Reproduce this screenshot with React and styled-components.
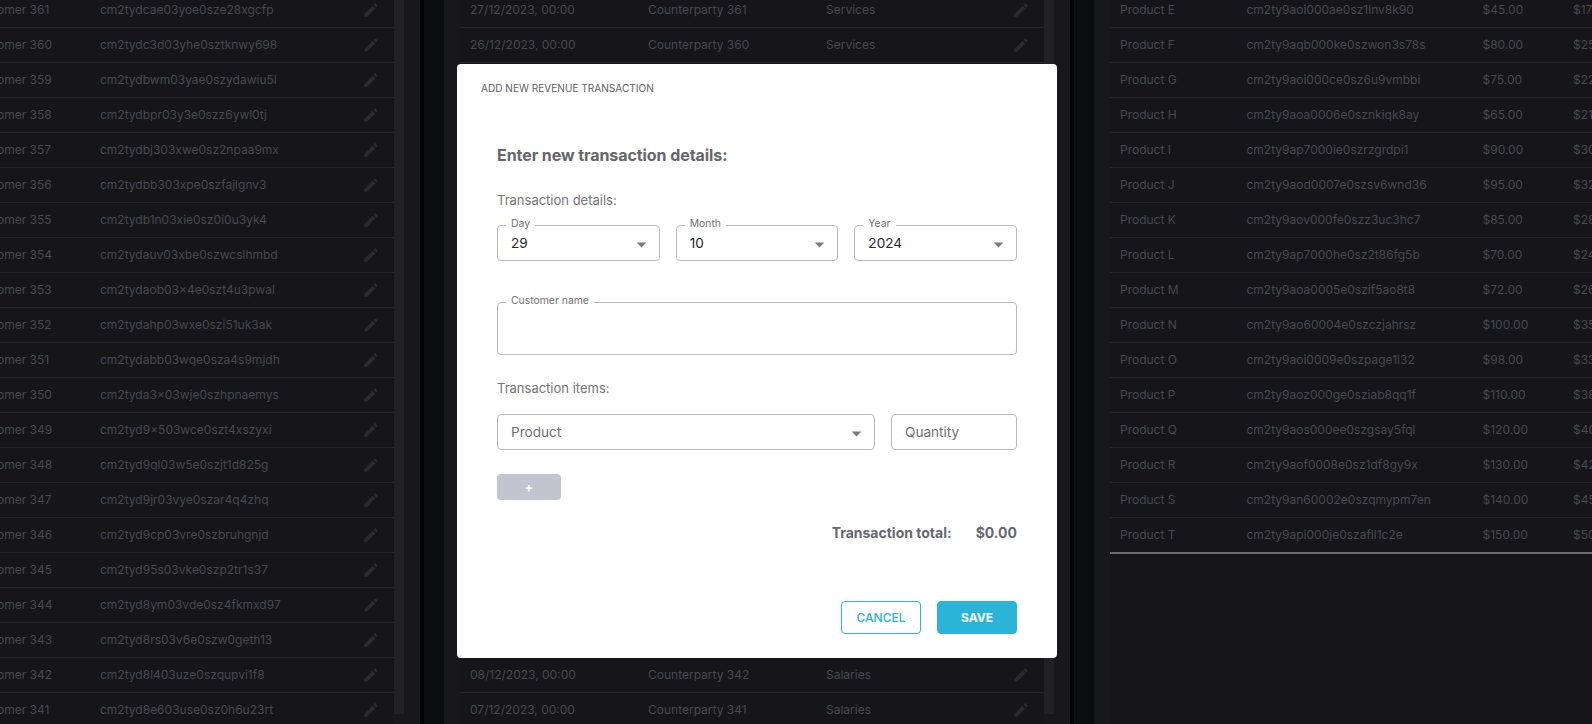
import React from "react";
import styled, { createGlobalStyle } from "styled-components";

const GlobalStyle = createGlobalStyle`
  html, body {
    margin: 0;
    height: 100%;
    overflow: hidden;
    background: #0c0d10;
    font-family: Inter, "Liberation Sans", sans-serif;
  }
`;

const Board = styled.div`
  display: flex;
  height: 731px;
  margin: -7px 0 0 -206px;
  overflow: hidden;
`;

const Panel = styled.section`
  flex: none;
  display: flex;
  width: 626px;
  box-sizing: border-box;
  padding: 0 16px;
  background: #18181b;
  overflow: hidden;
`;

const Gutter = styled.div`
  flex: none;
  width: 24px;
  background: linear-gradient(90deg, #000 0 4px, #0c0d10 4px);
`;

const Table = styled.div`
  flex: none;
  width: ${(p) => (p.$wide ? "700px" : "584px")};
  background: #15151a;
  align-self: stretch;
`;

const Scrollbar = styled.div`
  flex: none;
  width: 10px;
  height: 721px;
  background: #222224;
`;

const Row = styled.div`
  display: grid;
  grid-template-columns: ${(p) => p.$cols};
  align-items: center;
  box-sizing: border-box;
  height: ${(p) => (p.$last ? 36 : 35)}px;
  padding: 0 0 ${(p) => (p.$last ? 1 : 2)}px ${(p) => p.$indent || 10}px;
  border-bottom: ${(p) => (p.$last ? "2px solid #6c6c6e" : "1px solid #242429")};
  color: #49494e;
  font-size: 12px;
  white-space: nowrap;
`;

const EditIcon = styled.svg`
  width: 18px;
  height: 18px;
  margin-top: 2px;
  fill: #2b2b2e;
  justify-self: center;
`;

const Pencil = () => (
  <EditIcon viewBox="0 0 24 24">
    <path d="M3 17.25V21h3.75L17.81 9.94l-3.75-3.75L3 17.25zM20.71 7.04c.39-.39.39-1.02 0-1.41l-2.34-2.34a.9959.9959 0 0 0-1.41 0l-1.83 1.83 3.75 3.75 1.83-1.83z" />
  </EditIcon>
);

const Backdrop = styled.div`
  position: fixed;
  top: 64px;
  left: 457px;
  width: 600px;
  height: 594px;
  box-sizing: border-box;
  padding: 16px 40px 24px;
  background: #fff;
  border-radius: 4px;
`;

const Title = styled.div`
  margin-left: -16px;
  font-size: 10.08px;
  line-height: 16px;
  color: #5f6066;
  text-transform: uppercase;
`;

const Heading = styled.h2`
  margin: 49px 0 0;
  font-size: 16px;
  line-height: 20px;
  font-weight: 700;
  letter-spacing: -0.07px;
  color: #66666a;
`;

const SectionLabel = styled.div`
  margin-top: ${(p) => p.$top}px;
  font-size: 13px;
  line-height: 20px;
  color: #75757a;
`;

const FieldRow = styled.div`
  display: flex;
  gap: 16px;
  margin-top: ${(p) => p.$top}px;
`;

const Field = styled.div`
  position: relative;
  flex: ${(p) => (p.$width ? `0 0 ${p.$width}px` : "1 1 0")};
  display: flex;
  align-items: center;
  justify-content: space-between;
  box-sizing: border-box;
  height: ${(p) => p.$height || 36}px;
  padding: 0 5px 1px 13px;
  border: 1px solid #bbbbbd;
  border-radius: 4px;
  font-size: 13.6px;
  color: ${(p) => (p.$muted ? "#6f6f74" : "#26262a")};
`;

const FieldLabel = styled.label`
  position: absolute;
  top: -8px;
  left: 8px;
  padding: 0 5px;
  background: #fff;
  font-size: 10.4px;
  line-height: 12px;
  color: #6f6f74;
`;

const Arrow = styled.svg`
  width: 23px;
  height: 23px;
  margin: 3px 1px 0 0;
  fill: #7a7a7e;
`;

const Caret = () => (
  <Arrow viewBox="0 0 24 24">
    <path d="M7 10l5 5 5-5z" />
  </Arrow>
);

const AddButton = styled.button`
  display: block;
  width: 64px;
  height: 26px;
  margin-top: 24px;
  padding: 0;
  border: 0;
  border-radius: 4px;
  background: #c2c5cf;
  color: #fff;
  font: 700 13px Inter, sans-serif;
`;

const Total = styled.div`
  display: flex;
  justify-content: flex-end;
  gap: 24px;
  margin-top: 23px;
  font-size: 14px;
  line-height: 20px;
  font-weight: 700;
  color: #66686e;
`;

const Footer = styled.div`
  display: flex;
  justify-content: flex-end;
  gap: 16px;
  margin-top: 58px;
`;

const ActionButton = styled.button`
  width: 80px;
  height: 33px;
  padding: 0;
  border: 1px solid #2bb3d8;
  border-radius: 4px;
  background: ${(p) => (p.$primary ? "#2bb3d8" : "#fff")};
  color: ${(p) => (p.$primary ? "#fff" : "#2bb3d8")};
  font: ${(p) => (p.$primary ? 700 : 500)} 12px Inter, sans-serif;
  text-transform: uppercase;
`;

const customers = [
  "cm2tydcae03yoe0sze28xgcfp", "cm2tydc3d03yhe0sztknwy698", "cm2tydbwm03yae0szydawiu5l",
  "cm2tydbpr03y3e0szz6ywl0tj", "cm2tydbj303xwe0sz2npaa9mx", "cm2tydbb303xpe0szfajlgnv3",
  "cm2tydb1n03xie0sz0i0u3yk4", "cm2tydauv03xbe0szwcslhmbd", "cm2tydaob03x4e0szt4u3pwal",
  "cm2tydahp03wxe0szi51uk3ak", "cm2tydabb03wqe0sza4s9mjdh", "cm2tyda3x03wje0szhpnaemys",
  "cm2tyd9x503wce0szt4xszyxi", "cm2tyd9ql03w5e0szjt1d825g", "cm2tyd9jr03vye0szar4q4zhq",
  "cm2tyd9cp03vre0szbruhgnjd", "cm2tyd95s03vke0szp2tr1s37", "cm2tyd8ym03vde0sz4fkmxd97",
  "cm2tyd8rs03v6e0szw0geth13", "cm2tyd8l403uze0szqupvi1f8", "cm2tyd8e603use0sz0h6u23rt",
];

const products = [
  ["E", "cm2ty9aoi000ae0sz1lnv8k90", "$45.00", "$17.00"],
  ["F", "cm2ty9aqb000ke0szwon3s78s", "$80.00", "$25.00"],
  ["G", "cm2ty9aoi000ce0sz6u9vmbbi", "$75.00", "$22.00"],
  ["H", "cm2ty9aoa0006e0sznkiqk8ay", "$65.00", "$21.00"],
  ["I", "cm2ty9ap7000ie0szrzgrdpi1", "$90.00", "$30.00"],
  ["J", "cm2ty9aod0007e0szsv6wnd36", "$95.00", "$32.00"],
  ["K", "cm2ty9aov000fe0szz3uc3hc7", "$85.00", "$28.00"],
  ["L", "cm2ty9ap7000he0sz2t86fg5b", "$70.00", "$24.00"],
  ["M", "cm2ty9aoa0005e0szif5ao8t8", "$72.00", "$26.00"],
  ["N", "cm2ty9ao60004e0szczjahrsz", "$100.00", "$35.00"],
  ["O", "cm2ty9aoi0009e0szpage1l32", "$98.00", "$33.00"],
  ["P", "cm2ty9aoz000ge0sziab8qq1f", "$110.00", "$38.00"],
  ["Q", "cm2ty9aos000ee0szgsay5fql", "$120.00", "$40.00"],
  ["R", "cm2ty9aof0008e0sz1df8gy9x", "$130.00", "$42.00"],
  ["S", "cm2ty9an60002e0szqmypm7en", "$140.00", "$45.00"],
  ["T", "cm2ty9api000je0szafll1c2e", "$150.00", "$50.00"],
];

export default function App() {
  return (
    <>
      <GlobalStyle />
      <Board>
        <Panel>
          <Table>
            {customers.map((id, i) => (
              <Row key={id} $indent={161} $cols="129px 1fr 46px">
                <span>Customer {361 - i}</span>
                <span>{id}</span>
                <Pencil />
              </Row>
            ))}
          </Table>
          <Scrollbar />
        </Panel>
        <Gutter />
        <Panel>
          <Table>
            {customers.map((id, i) => (
              <Row key={id} $cols="178px 178px 1fr 46px">
                <span>{String(27 - i).padStart(2, "0")}/12/2023, 00:00</span>
                <span>Counterparty {361 - i}</span>
                <span>{i < 10 ? "Services" : "Salaries"}</span>
                <Pencil />
              </Row>
            ))}
          </Table>
          <Scrollbar />
        </Panel>
        <Gutter />
        <Panel>
          <Table $wide>
            {products.map(([name, id, price, cost], i) => (
              <Row key={id} $cols="126.5px 236px 90.5px 1fr" $last={i === products.length - 1}>
                <span>Product {name}</span>
                <span>{id}</span>
                <span>{price}</span>
                <span>{cost}</span>
              </Row>
            ))}
          </Table>
        </Panel>
      </Board>
      <Backdrop>
        <Title>Add new revenue transaction</Title>
        <Heading>Enter new transaction details:</Heading>
        <SectionLabel $top={25}>Transaction details:</SectionLabel>
        <FieldRow $top={15}>
          <Field>
            <FieldLabel>Day</FieldLabel>
            29
            <Caret />
          </Field>
          <Field>
            <FieldLabel>Month</FieldLabel>
            10
            <Caret />
          </Field>
          <Field>
            <FieldLabel>Year</FieldLabel>
            2024
            <Caret />
          </Field>
        </FieldRow>
        <FieldRow $top={41}>
          <Field $height={53}>
            <FieldLabel>Customer name</FieldLabel>
          </Field>
        </FieldRow>
        <SectionLabel $top={23}>Transaction items:</SectionLabel>
        <FieldRow $top={16}>
          <Field $muted>
            Product
            <Caret />
          </Field>
          <Field $muted $width={126}>
            Quantity
          </Field>
        </FieldRow>
        <AddButton>+</AddButton>
        <Total>
          <span>Transaction total:</span>
          <span>$0.00</span>
        </Total>
        <Footer>
          <ActionButton>Cancel</ActionButton>
          <ActionButton $primary>Save</ActionButton>
        </Footer>
      </Backdrop>
    </>
  );
}
